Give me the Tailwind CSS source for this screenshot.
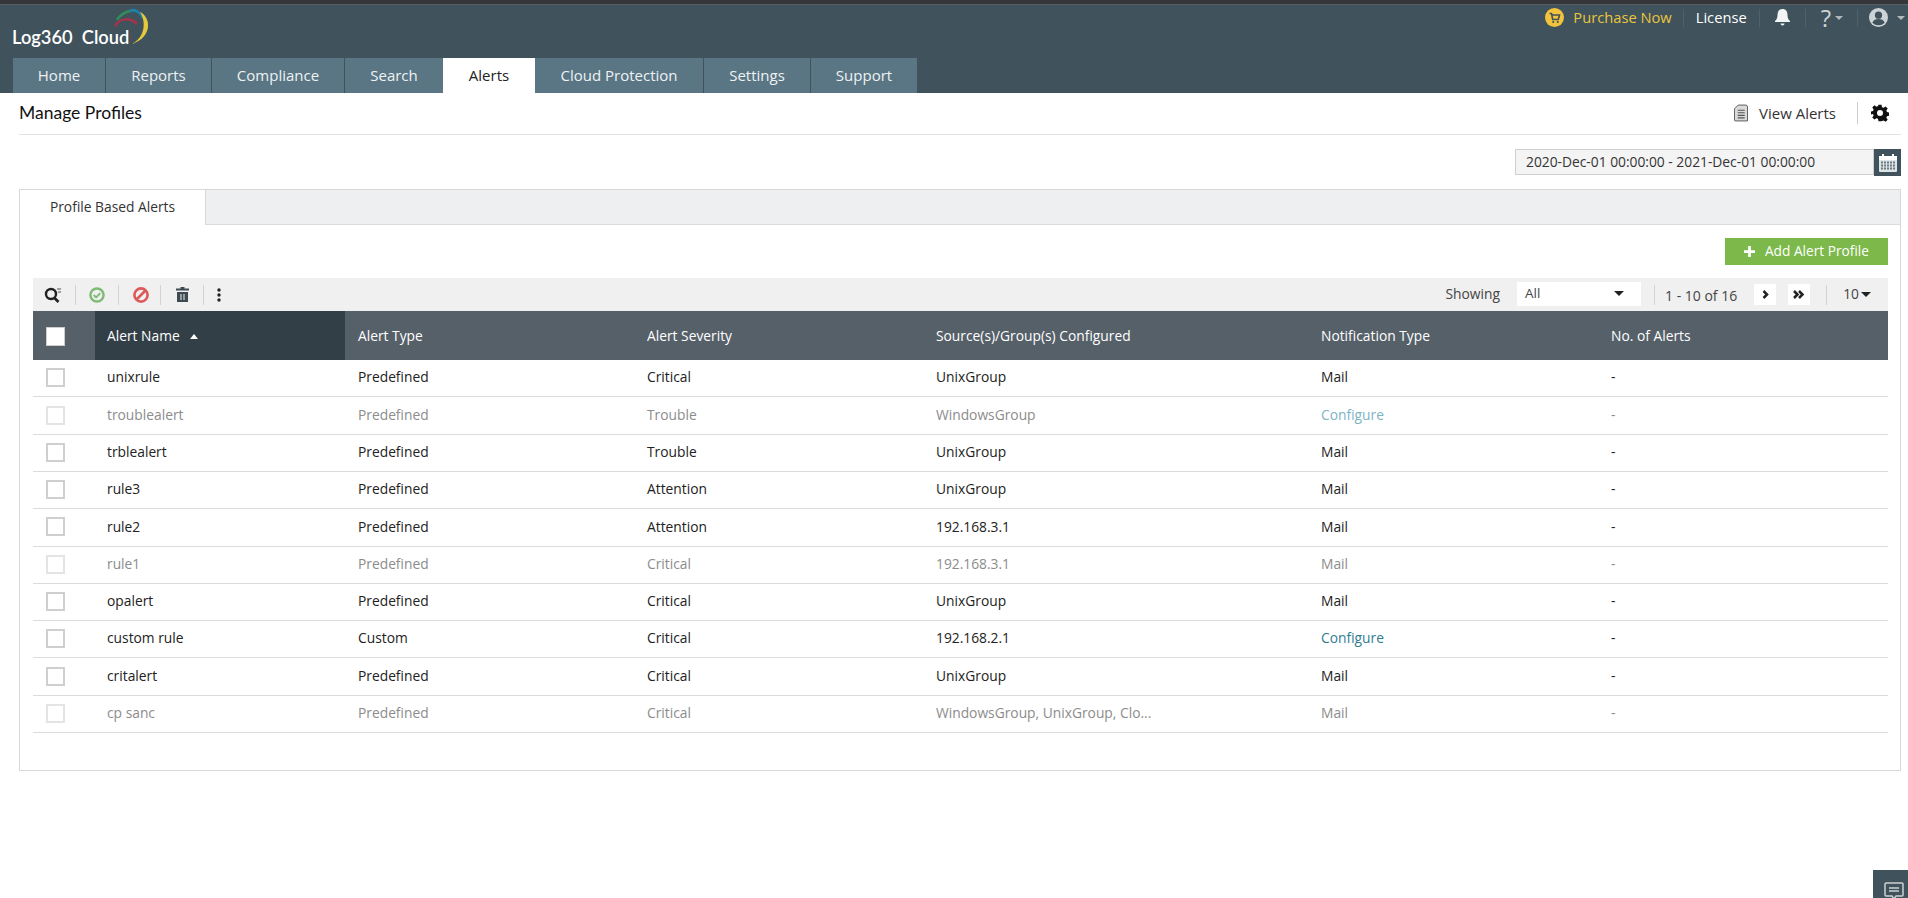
<!DOCTYPE html>
<html lang="en">
<head>
  <meta charset="UTF-8" />
  <title>Log360 Cloud - Manage Profiles</title>
  <script src="https://cdn.jsdelivr.net/npm/@tailwindcss/browser@4"></script>
</head>
<body class="h-[898px] overflow-hidden bg-white relative font-['Open_Sans',sans-serif] text-[14px] text-[#222]">

  <!-- top bar -->
  <div class="h-[5px] bg-[#35363a] border-b border-[#5a5f63]"></div>
  <header class="h-[88px] bg-[#40525b] relative">
    <div class="flex justify-between h-[53px]">
      <div class="relative w-[200px]">
        <svg class="absolute left-[110px] top-0" width="44" height="44" viewBox="0 0 44 44" fill="none">
          <path d="M7 15 C10 10 15 7 20 6" stroke="#2f8f5b" stroke-width="2.500"/>
          <path d="M20 6 C25 4 30 7 33 13" stroke="#1f7fa8" stroke-width="3"/>
          <path d="M5 21 C10 13 20 12 27 19" stroke="#a8324a" stroke-width="2.500"/>
          <path d="M30 7 C41 12 43 32 22 39 C34 33 37 18 30 7z" fill="#e4c93c"/>
        </svg>
        <span class="absolute left-[12px] top-[19px] font-['Lato',sans-serif] font-semibold text-[18.300px] text-white whitespace-nowrap">Log360&nbsp; Cloud</span>
      </div>
      <div class="flex items-center h-[25px] pr-[3px] text-[14.700px]">
        <svg width="19" height="19" viewBox="0 0 19 19"><circle cx="9.500" cy="9.500" r="9.500" fill="#f2c33c"/><path d="M4.500 5.500h2l1.200 6h5.600l1.200-4.500H7" fill="none" stroke="#40525b" stroke-width="1.600"/><circle cx="8.200" cy="14" r="1.100" fill="#40525b"/><circle cx="12.800" cy="14" r="1.100" fill="#40525b"/></svg>
        <span class="ml-[9px] text-[#e9c53e]">Purchase Now</span>
        <span class="w-px h-[18px] bg-[#4f626b] ml-[11px]"></span>
        <span class="ml-[12px] text-white">License</span>
        <span class="w-px h-[18px] bg-[#4f626b] ml-[12px]"></span>
        <svg class="ml-[14px]" width="17" height="19" viewBox="0 0 17 19" fill="#f2f4f5"><path d="M8.500 1c3.600 0 5 2.600 5 6 0 3.200 1 4.600 2.500 6v1H1v-1c1.500-1.400 2.500-2.800 2.500-6 0-3.400 1.400-6 5-6z"/><path d="M6.500 15.500h4a2 2 0 0 1-4 0z"/></svg>
        <span class="w-px h-[18px] bg-[#4f626b] ml-[14px]"></span>
        <span class="ml-[15px] text-[#ccd3d6] text-[24px] leading-none">?</span>
        <span class="ml-[4px] mt-[1px] border-x-[4px] border-x-transparent border-t-[4px] border-t-[#aeb8bd]"></span>
        <span class="w-px h-[18px] bg-[#4f626b] ml-[14px]"></span>
        <svg class="ml-[11px]" width="19" height="19" viewBox="0 0 20 20"><circle cx="10" cy="10" r="10" fill="#ccd3d6"/><circle cx="10" cy="7.500" r="3.800" fill="#40525b"/><path d="M3.500 15.500c1-3 3.500-4 6.500-4s5.500 1 6.500 4a9 9 0 0 1-13 0z" fill="#40525b"/></svg>
        <span class="ml-[9px] mt-[1px] border-x-[4px] border-x-transparent border-t-[4px] border-t-[#aeb8bd]"></span>
      </div>
    </div>
    <nav class="flex pl-[13px] h-[35px] text-[15px] text-[#eef2f3]">
      <a class="w-[93px] flex items-center justify-center bg-[#5a7684] border-r border-[#40525b]">Home</a>
      <a class="w-[106px] flex items-center justify-center bg-[#5a7684] border-r border-[#40525b]">Reports</a>
      <a class="w-[133px] flex items-center justify-center bg-[#5a7684] border-r border-[#40525b]">Compliance</a>
      <a class="w-[98px] flex items-center justify-center bg-[#5a7684]">Search</a>
      <a class="w-[92px] flex items-center justify-center bg-white text-[#222]">Alerts</a>
      <a class="w-[169px] flex items-center justify-center bg-[#5a7684] border-r border-[#40525b]">Cloud Protection</a>
      <a class="w-[107px] flex items-center justify-center bg-[#5a7684] border-r border-[#40525b]">Settings</a>
      <a class="w-[106px] flex items-center justify-center bg-[#5a7684]">Support</a>
    </nav>
  </header>

  <main class="pl-[19px] pr-[7px]">
    <!-- page title -->
    <div class="h-[42px] flex items-center justify-between border-b border-[#e2e2e2]">
      <h1 class="font-['Lato',sans-serif] font-normal text-[17.500px] text-[#111] -mt-[1px]">Manage Profiles</h1>
      <div class="flex items-center -mt-[1px]">
        <svg width="14" height="18" viewBox="0 0 15 18"><path d="M4.500 .5h8a2 2 0 0 1 2 2v15h-13a1 1 0 0 1-1-1V4.500z" fill="#d9dbdb" stroke="#555"/><path d="M4 6h7.500M4 8.800h7.500M4 11.500h7.500M4 14.200h7.500" stroke="#555" stroke-width="1.200"/></svg>
        <span class="ml-[11px] text-[15px] text-[#333]">View Alerts</span>
        <span class="w-px h-[22px] bg-[#ccc] ml-[21px]"></span>
        <svg class="ml-[13px] mr-[12px]" width="18" height="18" viewBox="0 0 24 24" fill="#111"><path fill-rule="evenodd" d="M10 1h4l.7 3.200 2 .8 2.800-1.800 2.800 2.800-1.800 2.800.8 2 3.200.7v4l-3.200.7-.8 2 1.800 2.800-2.800 2.800-2.800-1.800-2 .8L14 23h-4l-.7-3.200-2-.8-2.800 1.800-2.800-2.800 1.800-2.800-.8-2L-.5 14v-4l3.200-.7.800-2L1.700 4.500l2.800-2.800 2.800 1.800 2-.8zM12 8a4 4 0 1 0 0 8 4 4 0 0 0 0-8z"/></svg>
      </div>
    </div>

    <!-- date range -->
    <div class="flex justify-end mt-[14px] h-[27px]">
      <div class="w-[359px] h-[26px] bg-[#f4f4f4] border border-[#cfcfcf] flex items-center pl-[10px] text-[13.800px] text-[#333]">2020-Dec-01 00:00:00 - 2021-Dec-01 00:00:00</div>
      <div class="w-[27px] h-[27px] bg-[#40525b] flex items-center justify-center">
        <svg width="18" height="18" viewBox="0 0 18 18"><rect x="0" y="2" width="18" height="16" rx="1" fill="#dfe4e6"/><rect x="0" y="2" width="18" height="4" fill="#fff"/><rect x="3" y="0" width="2" height="4" fill="#fff"/><rect x="13" y="0" width="2" height="4" fill="#fff"/><path d="M2 8.500h14M2 11.500h14M2 14.500h14" stroke="#6b7b83" stroke-width="2" stroke-dasharray="2 1"/></svg>
      </div>
    </div>

    <!-- panel -->
    <section class="mt-[13px] h-[582px] border border-[#d8d8d8]">
      <div class="h-[35px] bg-[#eeeff0] border-b border-[#dcdcdc] flex">
        <div class="w-[186px] h-[35px] bg-white border-r border-[#d8d8d8] flex items-center justify-center text-[13.800px] text-[#333]">Profile Based Alerts</div>
      </div>

      <div class="pl-[13px] pr-[12px]">
        <div class="flex justify-end mt-[13px]">
          <button class="w-[163px] h-[27px] bg-[#7cb94a] text-white text-[13.700px] flex items-center justify-center gap-[10px] pb-[1px]">
            <svg width="11" height="11" viewBox="0 0 12 12" fill="#fff"><path d="M4.500 0h3v4.500H12v3H7.500V12h-3V7.500H0v-3h4.500z"/></svg>
            Add Alert Profile
          </button>
        </div>

        <!-- toolbar -->
        <div class="mt-[13px] h-[33px] bg-[#f0f0f0] flex items-center justify-between">
          <div class="flex items-center pl-[11px]">
            <svg width="18" height="18" viewBox="0 0 18 18" fill="none"><circle cx="7" cy="8" r="5" stroke="#222" stroke-width="2.400"/><path d="M10.500 12l4 4" stroke="#222" stroke-width="2.600"/><path d="M13 3h4M14 6h3" stroke="#555" stroke-width="1"/></svg>
            <span class="w-px h-[20px] bg-[#d3d3d3] ml-[13px]"></span>
            <svg class="ml-[13px]" width="16" height="16" viewBox="0 0 17 17" fill="none"><circle cx="8.500" cy="8.500" r="7" stroke="#7fbb74" stroke-width="2.600"/><path d="M5 8.500l2.500 2.500 4.500-4.500" stroke="#7fbb74" stroke-width="2"/></svg>
            <span class="w-px h-[20px] bg-[#d3d3d3] ml-[13px]"></span>
            <svg class="ml-[14px]" width="16" height="16" viewBox="0 0 17 17" fill="none"><circle cx="8.500" cy="8.500" r="7" stroke="#dc5a5a" stroke-width="2.800"/><path d="M4 13L13 4" stroke="#dc5a5a" stroke-width="2.800"/></svg>
            <span class="w-px h-[20px] bg-[#d3d3d3] ml-[11px]"></span>
            <svg class="ml-[15px]" width="13" height="15" viewBox="0 0 13 15" fill="#3d4a52"><path d="M4.500 0h4v1.500h4.500v2H0v-2h4.500zM1 5h11v10H1zM4.500 7v6h1V7zM7.500 7v6h1V7z" fill-rule="evenodd"/></svg>
            <span class="w-px h-[20px] bg-[#d3d3d3] ml-[14px]"></span>
            <svg class="ml-[13px]" width="4" height="14" viewBox="0 0 4 14" fill="#222"><circle cx="2" cy="2" r="1.700"/><circle cx="2" cy="7" r="1.700"/><circle cx="2" cy="12" r="1.700"/></svg>
          </div>
          <div class="flex items-center text-[13.800px] text-[#444]">
            <span class="-mt-[1px]">Showing</span>
            <div class="ml-[17px] w-[124px] h-[24px] bg-white flex items-center justify-between pl-[8px] pr-[17px] -mt-[2px] text-[13.500px]">
              All
              <span class="border-x-[5px] border-x-transparent border-t-[5px] border-t-[#222]"></span>
            </div>
            <span class="w-px h-[20px] bg-[#d3d3d3] ml-[13px]"></span>
            <span class="ml-[10px] mt-[2px] text-[14px]">1 - 10 of 16</span>
            <span class="ml-[17px] w-[22px] h-[21px] bg-white flex items-center justify-center">
              <svg width="7" height="9" viewBox="0 0 7 9" fill="none"><path d="M1.500 1l3.500 3.500L1.500 8" stroke="#222" stroke-width="2.500"/></svg>
            </span>
            <span class="ml-[12px] w-[22px] h-[21px] bg-white flex items-center justify-center">
              <svg width="12" height="9" viewBox="0 0 12 9" fill="none"><path d="M1 1l3.500 3.500L1 8M6 1l3.500 3.500L6 8" stroke="#222" stroke-width="2.500"/></svg>
            </span>
            <span class="w-px h-[20px] bg-[#d3d3d3] ml-[16px]"></span>
            <span class="ml-[16px]">10</span>
            <span class="ml-[2px] mr-[17px] border-x-[5px] border-x-transparent border-t-[5px] border-t-[#222]"></span>
          </div>
        </div>

        <!-- table -->
        <table class="w-full table-fixed border-collapse text-[13.800px]">
          <colgroup>
            <col class="w-[62px]" /><col class="w-[250px]" /><col class="w-[289px]" /><col class="w-[289px]" /><col class="w-[385px]" /><col class="w-[290px]" /><col />
          </colgroup>
          <thead>
            <tr class="h-[48.600px] bg-[#566069] text-white text-left">
              <th class="pl-[13px] pt-[2px] font-normal"><span class="block w-[19px] h-[19px] bg-white border border-[#ccc]"></span></th>
              <th class="pl-[12px] pt-[2px] font-normal bg-[#333f47]">Alert Name <span class="inline-block ml-[7px] mb-[2px] border-x-[4px] border-x-transparent border-b-[5px] border-b-white"></span></th>
              <th class="pl-[13px] pt-[2px] font-normal">Alert Type</th>
              <th class="pl-[13px] pt-[2px] font-normal">Alert Severity</th>
              <th class="pl-[13px] pt-[2px] font-normal">Source(s)/Group(s) Configured</th>
              <th class="pl-[13px] pt-[2px] font-normal">Notification Type</th>
              <th class="pl-[13px] pt-[2px] font-normal">No. of Alerts</th>
            </tr>
          </thead>
          <tbody id="rows"></tbody>
        </table>
      </div>
    </section>
  </main>

  <!-- chat button -->
  <div class="absolute right-0 bottom-0 w-[35px] h-[28px] overflow-hidden bg-[#40525b] flex items-start justify-end pt-[12px] pr-[4px]">
    <svg class="shrink-0" width="20" height="18" viewBox="0 0 20 18" fill="none"><path d="M2 1h16a1 1 0 0 1 1 1v11a1 1 0 0 1-1 1h-6l-2 3-2-3H2a1 1 0 0 1-1-1V2a1 1 0 0 1 1-1z" stroke="#c9d1d5" stroke-width="1.500"/><path d="M5 6h10M5 9h10" stroke="#c9d1d5" stroke-width="1.500"/></svg>
  </div>

  <script>
    const profiles = [
      ["unixrule", "Predefined", "Critical", "UnixGroup", "Mail", false],
      ["troublealert", "Predefined", "Trouble", "WindowsGroup", "Configure", true],
      ["trblealert", "Predefined", "Trouble", "UnixGroup", "Mail", false],
      ["rule3", "Predefined", "Attention", "UnixGroup", "Mail", false],
      ["rule2", "Predefined", "Attention", "192.168.3.1", "Mail", false],
      ["rule1", "Predefined", "Critical", "192.168.3.1", "Mail", true],
      ["opalert", "Predefined", "Critical", "UnixGroup", "Mail", false],
      ["custom rule", "Custom", "Critical", "192.168.2.1", "Configure", false],
      ["critalert", "Predefined", "Critical", "UnixGroup", "Mail", false],
      ["cp sanc", "Predefined", "Critical", "WindowsGroup, UnixGroup, Clo...", "Mail", true]
    ];

    const tbody = document.getElementById("rows");
    profiles.forEach((p) => {
      const off = p[5];
      const tr = document.createElement("tr");
      tr.className = off ? "h-[37.300px] border-b border-[#dcdcdc] text-[#8c8c8c]" : "h-[37.300px] border-b border-[#dcdcdc] text-[#222]";
      const linkCls = off ? "text-[#7db4c4]" : "text-[#2f7d91]";
      const boxCls = off ? "border-[#e4e4e4]" : "border-[#cfcfcf]";
      const notif = p[4] === "Configure" ? `<span class="${linkCls}">Configure</span>` : p[4];
      tr.innerHTML =
        `<td class="pl-[13px] pb-[1px]"><span class="block w-[19px] h-[19px] bg-white border-2 ${boxCls}"></span></td>` +
        `<td class="pl-[12px] pb-[1px]">${p[0]}</td>` +
        `<td class="pl-[13px] pb-[1px]">${p[1]}</td>` +
        `<td class="pl-[13px] pb-[1px]">${p[2]}</td>` +
        `<td class="pl-[13px] pb-[1px]">${p[3]}</td>` +
        `<td class="pl-[13px] pb-[1px]">${notif}</td>` +
        `<td class="pl-[13px] pb-[1px]">-</td>`;
      tbody.appendChild(tr);
    });
  </script>
</body>
</html>
